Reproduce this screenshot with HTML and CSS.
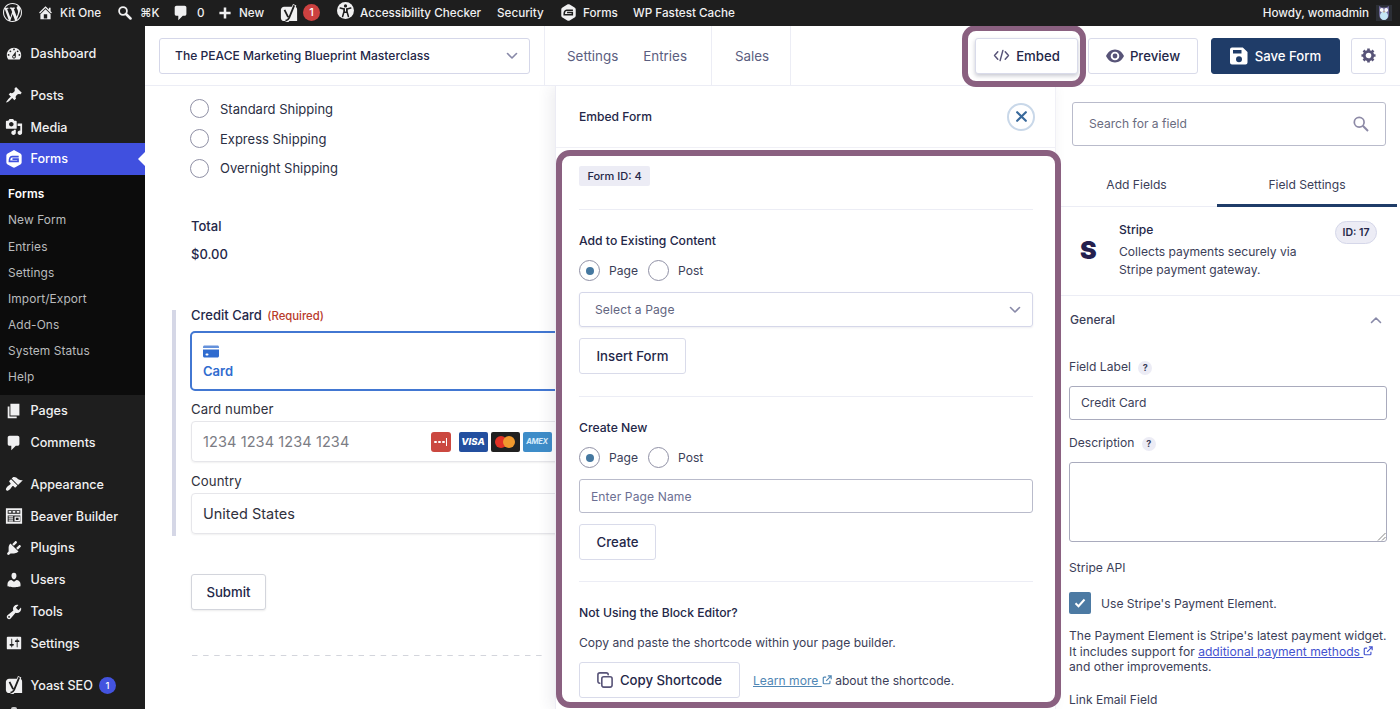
FILE: index.html
```
<!DOCTYPE html>
<html lang="en">
<head>
  <meta charset="UTF-8" />
  <meta name="viewport" content="width=device-width, initial-scale=1.0"/>
  <title>Form Editor - Kit One</title>
  <link rel="stylesheet" href="styles.css">
</head>
<body>
  <svg class="sprite">
    <symbol id="i-wp" viewBox="0 0 20 20"><path d="M20 10c0-5.51-4.49-10-10-10C4.48 0 0 4.49 0 10c0 5.52 4.48 10 10 10 5.51 0 10-4.48 10-10zM7.78 15.37L4.37 6.22c.55-.02 1.17-.08 1.17-.08.5-.06.44-1.13-.06-1.11 0 0-1.45.11-2.37.11-.18 0-.37 0-.58-.01C4.12 2.69 6.87 1.11 10 1.11c2.33 0 4.45.87 6.05 2.34-.68-.11-1.65.39-1.65 1.58 0 .74.45 1.36.9 2.1.35.61.55 1.36.55 2.46 0 1.49-1.4 5-1.4 5l-3.03-8.37c.54-.02.82-.17.82-.17.5-.05.44-1.25-.06-1.22 0 0-1.44.12-2.38.12-.87 0-2.33-.12-2.33-.12-.5-.03-.56 1.2-.06 1.22l.92.08 1.26 3.41zM17.41 10c.24-.64.74-1.87.43-4.25.7 1.29 1.05 2.71 1.05 4.25 0 3.29-1.73 6.24-4.4 7.78.97-2.59 1.94-5.2 2.92-7.78zM6.1 18.09C3.12 16.65 1.11 13.53 1.11 10c0-1.3.23-2.48.72-3.59C3.25 10.3 4.67 14.2 6.1 18.09zm4.03-6.63l2.58 6.98c-.86.29-1.76.45-2.71.45-.79 0-1.57-.11-2.29-.33.81-2.38 1.62-4.74 2.42-7.1z"/></symbol>
    <symbol id="i-home" viewBox="0 0 20 20"><path d="M16 8.5l1.53 1.53-1.06 1.06L10 4.6l-6.47 6.49-1.06-1.06L10 2.5l4 4v-2h2v4zm-6-2.46l6 5.99V18H4v-5.97zM12 17v-5H8v5h4z"/></symbol>
    <symbol id="i-search" viewBox="0 0 20 20"><circle cx="8" cy="8" r="5.2" fill="none" stroke="currentColor" stroke-width="2.4"/><path d="M12 12l6 6" stroke="currentColor" stroke-width="3.4" stroke-linecap="round"/></symbol>
    <symbol id="i-comment" viewBox="0 0 20 20"><path d="M5 2h9c1.1 0 2 .9 2 2v7c0 1.1-.9 2-2 2h-2l-5 5v-5H5c-1.1 0-2-.9-2-2V4c0-1.1.9-2 2-2z"/></symbol>
    <symbol id="i-plus" viewBox="0 0 20 20"><path d="M8.2 2h3.6v6.2H18v3.6h-6.200V18H8.200v-6.200H2V8.200h6.200z"/></symbol>
    <symbol id="i-yoast" viewBox="0 0 20 20"><path d="M4.500 3H17c1.200.500 2 1.600 2 3v13H4.500C2.600 19 1 17.500 1 15.500v-9C1 4.500 2.600 3 4.500 3z"/><path d="M16.300.800L10.300 15.800c-.700 1.900-1.800 2.900-4.200 3.200" fill="none" stroke="currentColor" stroke-width="4"/><path d="M5 6.500l4 8M15.800 1.500L10 15.600c-.700 1.900-1.800 2.700-3.900 3" fill="none" stroke="#1e1e1e" stroke-width="2"/></symbol>
    <symbol id="i-access" viewBox="0 0 20 20"><circle cx="10" cy="10" r="10"/><circle cx="10" cy="4.600" r="1.900" fill="#1e1e1e"/><path d="M3.800 7.200l4.400 1v3.200L6.600 17M16.200 7.200l-4.400 1v3.200l1.600 5.600M8.500 8v4h3V8" fill="none" stroke="#1e1e1e" stroke-width="1.800" stroke-linecap="round" stroke-linejoin="round"/></symbol>
    <symbol id="i-gravity" viewBox="0 0 20 20"><path d="M8.600.700c.900-.500 1.900-.500 2.800 0l5.700 3.300c.900.500 1.400 1.400 1.400 2.400v7.200c0 1-.500 1.900-1.400 2.400l-5.700 3.300c-.900.500-1.900.500-2.800 0L2.900 16c-.900-.500-1.400-1.400-1.400-2.400V6.400c0-1 .500-1.900 1.400-2.400z"/><path d="M15.200 7.300H7.800c-2 0-2.900 2-2.900 5.400h9.600v-2.600H8.300" fill="none" stroke="var(--cut, #1e1e1e)" stroke-width="1.800"/></symbol>
    <symbol id="i-dash" viewBox="0 0 20 20"><path d="M3.760 16h12.480c1.100-1.370 1.760-3.110 1.760-5 0-4.420-3.580-8-8-8s-8 3.580-8 8c0 1.890.660 3.630 1.760 5zM10 4c.550 0 1 .450 1 1s-.450 1-1 1-1-.450-1-1 .450-1 1-1zM6 6c.550 0 1 .450 1 1s-.450 1-1 1-1-.450-1-1 .450-1 1-1zm8 0c.550 0 1 .450 1 1s-.450 1-1 1-1-.450-1-1 .450-1 1-1zm-5.370 5.550L12 7v6c0 1.100-.900 2-2 2s-2-.900-2-2c0-.570.240-1.080.630-1.450zM4 10c.550 0 1 .450 1 1s-.450 1-1 1-1-.450-1-1 .450-1 1-1zm12 0c.550 0 1 .450 1 1s-.450 1-1 1-1-.450-1-1 .450-1 1-1zm-5 3c0-.550-.450-1-1-1s-1 .450-1 1 .450 1 1 1 1-.450 1-1z"/></symbol>
    <symbol id="i-post" viewBox="0 0 20 20"><path d="M10.440 3.020l1.820-1.820 6.360 6.350-1.830 1.820c-1.050-.680-2.480-.570-3.410.360l-.750.750c-.920.930-1.040 2.350-.350 3.410l-1.830 1.820-2.410-2.410-2.800 2.790c-.420.420-3.380 2.710-3.800 2.290s1.860-3.390 2.280-3.810l2.790-2.790L4.100 9.360l1.830-1.820c1.050.690 2.480.570 3.400-.360l.750-.750c.930-.920 1.050-2.350.360-3.410z"/></symbol>
    <symbol id="i-media" viewBox="0 0 20 20"><path d="M13 11V4c0-.550-.450-1-1-1h-1.670L9 1H5L3.670 3H2c-.550 0-1 .450-1 1v7c0 .550.450 1 1 1h10c.550 0 1-.450 1-1zM7 4.500c1.380 0 2.500 1.120 2.500 2.500S8.380 9.500 7 9.500 4.500 8.380 4.500 7 5.620 4.500 7 4.500zM14 6h5v10.500c0 1.380-1.120 2.500-2.500 2.500S14 17.880 14 16.500s1.120-2.500 2.500-2.500c.170 0 .340.020.500.050V9h-3V6zm-4 8.050V13h2v3.500c0 1.380-1.120 2.500-2.500 2.500S7 17.880 7 16.500 8.120 14 9.500 14c.170 0 .340.020.500.050z"/></symbol>
    <symbol id="i-page" viewBox="0 0 20 20"><path d="M6 15V2h10v13H6zm-1 1h8v2H3V5h2v11z"/></symbol>
    <symbol id="i-brush" viewBox="0 0 20 20"><path d="M14.480 11.060L7.410 3.990l1.500-1.500c.500-.560 2.300-.470 3.510.320 1.210.800 1.430 1.280 2.910 2.100 1.180.640 2.450 1.260 4.450.850zm-.710.710L6.700 4.700 4.930 6.470c-.390.390-.390 1.020 0 1.410l1.060 1.060c.390.390.390 1.030 0 1.420-.600.600-1.430 1.110-2.210 1.690-.350.260-.700.530-1.010.840C1.430 14.230.400 16.080 1.400 17.070c.990 1 2.840-.030 4.180-1.360.310-.310.580-.660.850-1.020.570-.780 1.080-1.610 1.690-2.210.390-.390 1.020-.390 1.410 0l1.060 1.060c.390.390 1.020.390 1.410 0z"/></symbol>
    <symbol id="i-beaver" viewBox="0 0 20 20"><path fill-rule="evenodd" d="M1 1.500h18v17H1zM3 3.500h14v4H3zM3 9.500h14v7H3z"/><path d="M4 4.500h3v2H4zM8.500 4.500h3v2h-3zM13 4.500h3v2h-3zM4 10.300h5v1.300H4zM4 12.500h5v1.300H4zM4 14.700h5V16H4z"/><path d="M11.300 11.200h4.500v4h-4.500z" fill="none" stroke="currentColor" stroke-width="1.500"/></symbol>
    <symbol id="i-plug" viewBox="0 0 20 20"><path d="M13.110 4.360L9.870 7.600 8 5.730l3.240-3.240c.350-.340 1.050-.200 1.560.320.520.510.660 1.210.310 1.550zm-8 1.770l.910-1.120 9.010 9.010-1.190.840c-.710.710-2.630 1.160-3.820 1.160H6.140L4.900 17.260c-.590.590-1.540.590-2.120 0-.590-.580-.590-1.530 0-2.120l1.240-1.240v-3.880c0-1.130.400-3.190 1.090-3.890zm7.260 3.970l3.240-3.240c.340-.350 1.040-.210 1.550.310.520.510.660 1.210.310 1.550l-3.240 3.250z"/></symbol>
    <symbol id="i-user" viewBox="0 0 20 20"><path d="M10 9.250c-2.270 0-2.730-3.440-2.730-3.440C7 4.020 7.820 2 9.970 2c2.160 0 2.980 2.020 2.710 3.810 0 0-.410 3.440-2.680 3.440zm0 2.570L12.720 10c2.390 0 4.520 2.330 4.520 4.530v2.490s-3.650 1.130-7.240 1.130c-3.650 0-7.240-1.130-7.240-1.130v-2.490c0-2.250 1.940-4.480 4.470-4.480z"/></symbol>
    <symbol id="i-tool" viewBox="0 0 20 20"><path d="M16.680 9.770c-1.340 1.340-3.300 1.670-4.950.990l-5.410 6.520c-.990.990-2.590.990-3.580 0s-.990-2.590 0-3.570l6.520-5.420c-.680-1.650-.350-3.610.990-4.950 1.280-1.280 3.120-1.620 4.720-1.060l-2.890 2.890 2.820 2.820 2.860-2.870c.530 1.580.180 3.390-1.080 4.650zM3.810 16.210c.400.390 1.040.390 1.430 0 .400-.400.400-1.040 0-1.430-.390-.400-1.030-.400-1.430 0-.390.390-.390 1.030 0 1.430z"/></symbol>
    <symbol id="i-sliders" viewBox="0 0 20 20"><path d="M18 16V4c0-.550-.450-1-1-1H3c-.550 0-1 .450-1 1v12c0 .550.450 1 1 1h14c.550 0 1-.450 1-1zM8 11h1c.550 0 1 .450 1 1s-.450 1-1 1H8v1.500c0 .280-.220.500-.500.500s-.500-.220-.500-.500V13H6c-.550 0-1-.450-1-1s.450-1 1-1h1V5.500c0-.280.220-.500.500-.500s.500.220.500.500V11zm5-2h-1c-.550 0-1-.450-1-1s.450-1 1-1h1V5.500c0-.280.220-.500.500-.500s.500.220.500.500V7h1c.550 0 1 .450 1 1s-.450 1-1 1h-1v5.500c0 .280-.220.500-.500.500s-.500-.220-.500-.500V9z"/></symbol>
    <symbol id="i-chev" viewBox="0 0 12 8"><path d="M1.500 1.500L6 6l4.500-4.500" fill="none" stroke="currentColor" stroke-width="1.600" stroke-linecap="round" stroke-linejoin="round"/></symbol>
    <symbol id="i-ext" viewBox="0 0 12 12"><path d="M5 2.500H2.500a1 1 0 0 0-1 1v6a1 1 0 0 0 1 1h6a1 1 0 0 0 1-1V7M7 1h4v4M11 1L5 7" fill="none" stroke="currentColor" stroke-width="1.400"/></symbol>
  </svg>

  <header class="adminbar">
    <span class="bar-item wp"><svg class="ic19"><use href="#i-wp"/></svg></span>
    <span class="bar-item site"><svg class="ic17"><use href="#i-home"/></svg>Kit One</span>
    <span class="bar-item find"><svg class="ic15"><use href="#i-search"/></svg>⌘K</span>
    <span class="bar-item talk"><svg class="ic18"><use href="#i-comment"/></svg>0</span>
    <span class="bar-item new"><svg class="ic14"><use href="#i-plus"/></svg>New</span>
    <span class="bar-item yoast"><svg class="ic18"><use href="#i-yoast"/></svg><b class="count">1</b></span>
    <span class="bar-item access"><svg class="ic17"><use href="#i-access"/></svg>Accessibility Checker</span>
    <span class="bar-item security">Security</span>
    <span class="bar-item gforms"><svg class="ic17"><use href="#i-gravity"/></svg>Forms</span>
    <span class="bar-item cache">WP Fastest Cache</span>
    <span class="bar-item howdy">Howdy, womadmin
      <svg class="avatar" viewBox="0 0 16 16"><rect width="16" height="16" fill="#2c2f36"/><path d="M3 1l3 1.500h4L13 1v8c0 3.500-2 6-5 6s-5-2.500-5-6z" fill="#6f6a9c"/><ellipse cx="8" cy="10.700" rx="4" ry="4.300" fill="#c4e6f5"/><circle cx="5.800" cy="5" r="1.900" fill="#fff"/><circle cx="10.200" cy="5" r="1.900" fill="#fff"/><circle cx="5.800" cy="5" r=".800"/><circle cx="10.200" cy="5" r=".800"/><path d="M7.200 6.500h1.600L8 8z" fill="#d99c4a"/></svg>
    </span>
  </header>

  <div class="shell">
    <nav class="sidebar">
      <a class="item"><svg><use href="#i-dash"/></svg>Dashboard</a>
      <a class="item gap"><svg><use href="#i-post"/></svg>Posts</a>
      <a class="item"><svg><use href="#i-media"/></svg>Media</a>
      <a class="item current"><svg><use href="#i-gravity"/></svg>Forms</a>
      <div class="submenu">
        <a class="on">Forms</a>
        <a>New Form</a>
        <a>Entries</a>
        <a>Settings</a>
        <a>Import/Export</a>
        <a>Add-Ons</a>
        <a>System Status</a>
        <a>Help</a>
      </div>
      <a class="item"><svg><use href="#i-page"/></svg>Pages</a>
      <a class="item"><svg><use href="#i-comment"/></svg>Comments</a>
      <a class="item gap"><svg><use href="#i-brush"/></svg>Appearance</a>
      <a class="item"><svg><use href="#i-beaver"/></svg>Beaver Builder</a>
      <a class="item"><svg><use href="#i-plug"/></svg>Plugins</a>
      <a class="item"><svg><use href="#i-user"/></svg>Users</a>
      <a class="item"><svg><use href="#i-tool"/></svg>Tools</a>
      <a class="item"><svg><use href="#i-sliders"/></svg>Settings</a>
      <a class="item gap"><svg><use href="#i-yoast"/></svg>Yoast SEO <b class="count blue">1</b></a>
      <span class="next-icon"></span>
    </nav>

    <div class="editor">
      <div class="toolbar">
        <div class="form-switch">The PEACE Marketing Blueprint Masterclass <svg class="chev"><use href="#i-chev"/></svg></div>
        <div class="links main-links"><a>Settings</a><a>Entries</a></div>
        <div class="links sales-link"><a>Sales</a></div>
        <div class="actions">
          <button class="btn embed"><svg viewBox="0 0 18 14"><path d="M5 3L1.500 7 5 11M13 3l3.500 4-3.500 4M10.500 1.500l-3 11" fill="none" stroke="currentColor" stroke-width="1.600" stroke-linecap="round" stroke-linejoin="round"/></svg>Embed</button>
          <button class="btn preview"><svg viewBox="0 0 18 14"><path d="M9 .500C5 .500 1.700 3.300 0 7c1.700 3.700 5 6.500 9 6.500s7.300-2.800 9-6.500C16.300 3.300 13 .500 9 .500zm0 2.200a4.300 4.300 0 1 1 0 8.600 4.300 4.300 0 0 1 0-8.600z" fill="currentColor" fill-rule="evenodd"/><circle cx="9" cy="7" r="2.400" fill="currentColor"/></svg>Preview</button>
          <button class="btn save"><svg viewBox="0 0 18 18"><path fill="#fff" fill-rule="evenodd" d="M2 .500h10.800L17.500 5v10.500a2 2 0 0 1-2 2H2a2 2 0 0 1-2-2v-13a2 2 0 0 1 2-2zM3 3v3.500h8.500V3zM9 9.300a3 3 0 1 0 0 6 3 3 0 0 0 0-6z"/></svg>Save Form</button>
          <button class="btn gear"><svg viewBox="0 0 16 16"><circle cx="8" cy="8" r="4.500" fill="none" stroke="currentColor" stroke-width="3"/><path d="M8 .500v3M8 12.500v3M.500 8h3M12.500 8h3M2.700 2.700l2 2M11.300 11.300l2 2M2.700 13.300l2-2M11.300 4.700l2-2" stroke="currentColor" stroke-width="2.800"/></svg></button>
          <div class="mark mark-embed"></div>
        </div>
      </div>

      <div class="columns">
        <main class="canvas">
          <label class="choice"><i class="radio"></i>Standard Shipping</label>
          <label class="choice"><i class="radio"></i>Express Shipping</label>
          <label class="choice"><i class="radio"></i>Overnight Shipping</label>
          <div class="total"><b>Total</b><b>$0.00</b></div>
          <section class="card-field">
            <div class="card-label">Credit Card <span>(Required)</span></div>
            <div class="card-tab">
              <svg viewBox="0 0 16 12"><path d="M0 2.500V1.500C0 .700.700 0 1.500 0h13c.800 0 1.500.700 1.500 1.500v1z" opacity=".75"/><path fill-rule="evenodd" d="M0 4h16v6.500c0 .800-.700 1.500-1.500 1.500h-13C.700 12 0 11.300 0 10.500zm3.500 4a1 1 0 1 0 0 2h1a1 1 0 1 0 0-2z"/></svg>
              Card
            </div>
            <div class="stripe-label">Card number</div>
            <div class="stripe-input">
              <span class="placeholder">1234 1234 1234 1234</span>
              <span class="brand dots"><i></i><i></i><i></i><em></em></span>
              <span class="brand visa">VISA</span>
              <span class="brand mc"><i></i><i></i></span>
              <span class="brand amex">AMEX</span>
            </div>
            <div class="stripe-label country">Country</div>
            <div class="stripe-input">United States</div>
          </section>
          <button class="btn submit">Submit</button>
          <svg class="dashes"><path d="M1 .500h352" stroke="#d3d5dc" stroke-dasharray="5.500 5.600"/></svg>
        </main>

        <section class="flyout">
          <div class="fly-head">Embed Form
            <span class="close"><svg viewBox="0 0 12 12"><path d="M2 2l8 8M10 2l-8 8" stroke="currentColor" stroke-width="2" stroke-linecap="round"/></svg></span>
          </div>
          <div class="fly-body">
            <span class="form-id">Form ID: 4</span>
            <div class="block">
              <h3>Add to Existing Content</h3>
              <div class="radios"><i class="radio on"></i><span>Page</span><i class="radio"></i><span>Post</span></div>
              <div class="select">Select a Page <svg class="chev"><use href="#i-chev"/></svg></div>
              <button class="btn insert">Insert Form</button>
            </div>
            <div class="block second">
              <h3>Create New</h3>
              <div class="radios"><i class="radio on"></i><span>Page</span><i class="radio"></i><span>Post</span></div>
              <div class="name-input">Enter Page Name</div>
              <button class="btn create">Create</button>
            </div>
            <div class="block third">
              <h3>Not Using the Block Editor?</h3>
              <p>Copy and paste the shortcode within your page builder.</p>
              <div class="copy-row">
                <button class="btn copy"><svg viewBox="0 0 16 16"><rect x="4.800" y="4.800" width="10.300" height="10.300" rx="2" fill="none" stroke="currentColor" stroke-width="1.600"/><path d="M2.800 11.200C1.600 11.200.900 10.400.900 9.300V2.900c0-1.100.900-2 2-2h6.400c1.100 0 1.900.700 1.900 1.900" fill="none" stroke="currentColor" stroke-width="1.600" stroke-linecap="round"/></svg>Copy Shortcode</button>
                <span><a>Learn more <svg class="ext"><use href="#i-ext"/></svg></a> about the shortcode.</span>
              </div>
            </div>
          </div>
          <div class="mark mark-body"></div>
        </section>

        <aside class="panel">
          <div class="search">Search for a field <svg viewBox="0 0 16 16"><circle cx="6.200" cy="6.200" r="4.900" fill="none" stroke="currentColor" stroke-width="1.700"/><path d="M9.800 9.800l5.200 5.200" stroke="currentColor" stroke-width="2"/></svg></div>
          <div class="tabs"><a>Add Fields</a><a class="active">Field Settings</a></div>
          <div class="field-info">
            <div class="stripe-s">S</div>
            <div class="info-text"><b>Stripe</b>Collects payments securely via Stripe payment gateway.</div>
            <span class="pill">ID: 17</span>
          </div>
          <div class="section-head">General <svg class="chev up"><use href="#i-chev"/></svg></div>
          <div class="settings">
            <div class="label">Field Label <i>?</i></div>
            <div class="text-input">Credit Card</div>
            <div class="label desc">Description <i>?</i></div>
            <div class="textarea"><svg viewBox="0 0 9 9"><path d="M1 8.500L8.500 1M5 8.500L8.500 5" stroke="#777" stroke-width=".900"/></svg></div>
            <div class="label api">Stripe API</div>
            <div class="check-row"><span class="check"><svg viewBox="0 0 12 10"><path d="M1.500 5.200l3 3L10.500 1.500" fill="none" stroke="#fff" stroke-width="2"/></svg></span>Use Stripe's Payment Element.</div>
            <p class="help">The Payment Element is Stripe's latest payment widget.<br>It includes support for <a>additional payment methods <svg class="ext"><use href="#i-ext"/></svg></a><br>and other improvements.</p>
            <div class="label">Link Email Field</div>
          </div>
        </aside>
      </div>
    </div>
  </div>
</body>
</html>
```
FILE: styles.css
```
* { box-sizing: border-box; }
body {
  margin: 0;
  height: 709px;
  overflow: hidden;
  font-family: Inter, "Liberation Sans", sans-serif;
  font-size: 12.1px;
  color: #242748;
  background: #fff;
}
svg { fill: currentColor; flex: none; }
i, em { font-style: normal; }
h3, p { margin: 0; }
.sprite { display: none; }

/* admin bar */
.adminbar {
  height: 26px;
  background: #1e1e1e;
  color: #f0f0f1;
  display: flex;
  align-items: center;
  font-size: 11.7px;
  font-weight: 500;
  white-space: nowrap;
}
.bar-item {
  display: flex;
  align-items: center;
  height: 26px;
  padding-bottom: 1px;
}
.ic14 { width: 14px; height: 14px; }
.ic15 { width: 15px; height: 15px; }
.ic17 { width: 17px; height: 17px; }
.ic18 { width: 18px; height: 18px; }
.ic19 { width: 19px; height: 19px; }
.wp { width: 37px; padding-left: 3px; }
.site { width: 80px; gap: 6px; }
.find { width: 56px; gap: 8px; }
.talk { width: 45px; gap: 6px; }
.new { width: 62px; gap: 7px; }
.talk svg { margin-left: -1px; margin-right: 1px; }
.yoast { width: 57px; gap: 5px; }
.access { width: 160px; gap: 6px; }
.access svg { margin-top: -5px; }
.security { width: 63px; }
.gforms { width: 73px; gap: 6px; }
.howdy { margin-left: auto; margin-right: 8px; gap: 7px; }
.avatar { width: 16px; height: 16px; }
.count {
  width: 17px;
  height: 17px;
  border-radius: 50%;
  background: #cc4140;
  color: #fff;
  font-size: 11px;
  font-weight: 500;
  line-height: 17px;
  text-align: center;
}
.count.blue { background: #4353df; font-size: 9.5px; margin-left: 6px; }

.shell { display: flex; height: 683px; overflow: hidden; }

/* left menu */
.sidebar {
  width: 145px;
  background: #1e1e1e;
  color: #f0f0f1;
  padding-top: 11.7px;
  flex: none;
  overflow: hidden;
}
.item {
  display: flex;
  align-items: center;
  height: 31.8px;
  padding-left: 4.5px;
  font-size: 12.6px;
  font-weight: 500;
}
.item > svg { width: 18px; height: 18px; margin-right: 8px; }
.item.gap { margin-top: 10px; }
.item.current {
  background: #4050df;
  color: #fff;
  --cut: #4050df;
}
.item.current::after {
  content: "";
  margin-left: auto;
  border: 7px solid transparent;
  border-right-color: #fff;
  border-left: 0;
}
.submenu {
  background: #0c0c0c;
  height: 220px;
  padding: 6.5px 0 0 8px;
  color: #b9bbbd;
  font-size: 11.9px;
}
.submenu a {
  display: block;
  height: 26.1px;
  line-height: 26.1px;
  letter-spacing: .1px;
}
.submenu .on { color: #fff; font-weight: 600; }
.next-icon {
  display: block;
  width: 6px;
  height: 2px;
  margin: 6px 0 0 10.5px;
  border-radius: 3px 3px 0 0;
  background: #c8c8c9;
}

/* editor */
.editor { flex: 1; min-width: 0; display: flex; flex-direction: column; }
.toolbar {
  height: 60px;
  border-bottom: 1px solid #ecedf5;
  display: flex;
  align-items: center;
  flex: none;
}
.form-switch {
  margin-left: 14px;
  width: 371px;
  height: 36px;
  border: 1px solid #d5d7e9;
  border-radius: 3px;
  padding: 0 11px 0 15px;
  display: flex;
  align-items: center;
  justify-content: space-between;
  font-weight: 500;
}
.chev { width: 12px; height: 8px; color: #8889a8; }
.links {
  height: 59px;
  display: flex;
  align-items: center;
  border-left: 1px solid #ecedf5;
  color: #5b5e80;
  font-size: 13.4px;
}
.main-links { margin-left: 14px; padding-left: 22px; gap: 25px; width: 167px; }
.sales-link { border-right: 1px solid #ecedf5; width: 80px; justify-content: center; padding-left: 2px; }
.actions { display: flex; margin-left: auto; margin-right: 14px; position: relative; }
.btn {
  height: 36px;
  border: 1px solid #d9dbea;
  border-radius: 3px;
  background: #fff;
  color: #242748;
  font-family: inherit;
  font-size: 13.2px;
  font-weight: 500;
  padding: 0;
  display: flex;
  align-items: center;
  justify-content: center;
  white-space: nowrap;
}
.embed { width: 103px; gap: 6px; margin-right: 10px; box-shadow: 0 2px 4px rgba(36,39,72,.25); }
.embed svg { width: 17px; height: 13px; color: #585478; }
.preview { width: 110px; gap: 6px; margin-right: 13px; }
.preview svg { width: 18px; height: 14px; color: #585478; }
.save { width: 129px; gap: 7px; margin-right: 11px; background: #1f3c68; border-color: #1f3c68; color: #fff; }
.save svg { width: 18px; height: 18px; }
.gear { width: 35px; }
.gear svg { width: 15px; height: 15px; color: #585478; }
.mark {
  position: absolute;
  border: 6px solid #8a6080;
  border-radius: 14px;
  pointer-events: none;
  z-index: 5;
}
.mark-embed { left: -13px; top: -13px; width: 124px; height: 62px; }
.columns { display: flex; flex: 1; min-height: 0; }

/* form canvas */
.canvas { width: 410px; flex: none; padding: 8px 0 0 45px; overflow: hidden; }
.choice { display: flex; align-items: center; gap: 11px; height: 29.8px; font-size: 13px; color: #2b2f44; }
.radio { width: 19px; height: 19px; border: 1px solid #8f90a5; border-radius: 50%; flex: none; }
.total { padding: 29px 0 0 1px; height: 126.600px; }
.total b { display: block; height: 28px; line-height: 28px; font-weight: 500; font-size: 13px; }
.card-field {
  height: 226px;
  margin-left: -18px;
  border-left: 4px solid #d5d7e6;
  padding-left: 15px;
  white-space: nowrap;
}
.card-label { height: 21px; line-height: 10px; font-size: 13px; font-weight: 500; }
.card-label span { color: #b83a2a; font-size: 11.3px; margin-left: 2px; }
.card-tab {
  height: 60px;
  width: 400px;
  margin-left: -1px;
  border: 2px solid #4277d2;
  border-radius: 5px;
  padding: 12px 0 0 11px;
  color: #306ccf;
  font-size: 13px;
  font-weight: 600;
  line-height: 16px;
}
.card-tab svg { display: block; width: 16px; height: 13px; margin-bottom: 5px; }
.stripe-label { height: 30.500px; line-height: 37px; font-size: 13.2px; color: #30313d; letter-spacing: .1px; }
.country { line-height: 39px; }
.stripe-input {
  height: 41px;
  width: 400px;
  border: 1px solid #e6e6ea;
  border-radius: 4px;
  box-shadow: 0 1px 2px rgba(0,0,0,.06);
  padding-left: 11px;
  display: flex;
  align-items: center;
  font-size: 14.500px;
  color: #30313d;
}
.placeholder { color: #7b7c84; width: 227.500px; letter-spacing: .1px; }
.brand {
  width: 29px;
  height: 20px;
  margin-right: 3px;
  border-radius: 2px;
  display: flex;
  align-items: center;
  justify-content: center;
  font-weight: 700;
  color: #fff;
}
.dots { width: 20px; background: #cb4840; gap: 1.5px; margin-right: 8px; border-radius: 3px; }
.dots i { width: 2.5px; height: 2.5px; border-radius: 50%; background: #fff; }
.dots em { width: 1px; height: 8px; background: #fff; }
.visa { background: #234f9f; font-size: 9.500px; font-style: italic; font-weight: 800; }
.mc { background: #202020; }
.mc i { width: 12px; height: 12px; border-radius: 50%; background: #e33125; }
.mc i + i { background: #f0992e; margin-left: -4px; }
.amex { background: #3e8dc9; font-size: 7.500px; font-style: italic; color: #d7ecfb; letter-spacing: -.3px; }
.submit { width: 75px; margin: 38.500px 0 0 1px; border-color: #d3d5dc; box-shadow: 0 1px 2px rgba(0,0,0,.08); }
.dashes { display: block; width: 354px; height: 1px; margin: 45px 0 0 1px; }

/* embed flyout */
.flyout {
  width: 501px;
  flex: none;
  background: #fff;
  border-left: 1px solid #ececf4;
  border-right: 1px solid #f0f0f6;
  box-shadow: -4px 0 14px rgba(40,40,80,.09);
  position: relative;
  clip-path: inset(0 -10px 0 -20px);
}
.fly-head {
  height: 62px;
  border-bottom: 1px solid #f0f0f6;
  padding: 0 20px 0 23px;
  display: flex;
  align-items: center;
  justify-content: space-between;
  font-weight: 500;
}
.close {
  width: 28px;
  height: 28px;
  border: 2px solid #c9d8e9;
  border-radius: 50%;
  display: flex;
  align-items: center;
  justify-content: center;
  color: #39699b;
}
.close svg { width: 13px; height: 13px; }
.fly-body { padding: 18px 22px 0 23px; }
.form-id {
  display: block;
  width: 71px;
  height: 20px;
  line-height: 20px;
  text-align: center;
  background: #ececf5;
  border-radius: 2px;
  font-size: 11px;
  font-weight: 500;
  margin-bottom: 23px;
}
.block { border-top: 1px solid #ecedf5; padding-top: 21px; height: 187px; }
.block h3 { font-size: 12.200px; font-weight: 500; line-height: 20px; height: 29px; }
.radios { display: flex; align-items: center; height: 21px; margin-bottom: 11px; }
.radios .radio { width: 21px; height: 21px; margin-right: 9px; display: flex; align-items: center; justify-content: center; }
.radios .radio.on::after { content: ""; width: 8px; height: 8px; border-radius: 50%; background: #4578a0; }
.radios span { width: 39px; color: #3b3e58; }
.select, .name-input {
  height: 35px;
  border: 1px solid #d5d7e9;
  border-radius: 3px;
  padding: 0 11px 0 15px;
  display: flex;
  align-items: center;
  justify-content: space-between;
  color: #62657f;
  margin-bottom: 11px;
  letter-spacing: .1px;
}
.select { box-shadow: 0 1px 2px rgba(36,39,72,.08); }
.name-input { height: 34px; padding-left: 11px; border-color: #b9bbcb; color: #6c6f93; }
.insert { width: 107px; }
.create { width: 77px; }
.second { height: 185px; }
.third p { line-height: 20px; margin-bottom: 9px; color: #3b3e58; }
.third { padding-top: 21px; }
.third h3 { height: 30px; }
.copy-row { display: flex; align-items: center; gap: 13px; color: #3b3e58; }
.copy-row a { color: #4f86b4; text-decoration: underline; }
.copy { width: 161px; gap: 7px; }
.copy svg { width: 16px; height: 16px; color: #585478; }
.ext { width: 10px; height: 10px; }
.mark-body { left: 0; top: 64px; width: 505px; height: 558px; }

/* settings panel */
.panel { flex: 1; min-width: 0; color: #3b3e58; overflow: hidden; }
.search {
  margin: 16px 14px 0 16px;
  height: 44px;
  border: 1px solid #b9bbcb;
  border-radius: 3px;
  padding: 0 16px 1px;
  display: flex;
  align-items: center;
  justify-content: space-between;
  color: #6a6c80;
}
.search svg { width: 16px; height: 16px; color: #8d8aa6; }
.tabs { display: flex; height: 63px; padding-top: 17px; }
.tabs a {
  width: 161px;
  height: 44px;
  line-height: 44px;
  border-bottom: 1px solid #ecedf5;
  text-align: center;
}
.tabs .active { width: 180px; border-bottom: 3px solid #1f3c68; }
.field-info {
  display: flex;
  height: 87px;
  padding: 12px 23px 0 20px;
  border-bottom: 1px solid #ecedf5;
}
.stripe-s { width: 43px; padding-top: 15px; padding-left: 4px; font-size: 25px; font-weight: 900; color: #24204e; line-height: 28px; }
.info-text { width: 190px; line-height: 17.5px; }
.info-text b { display: block; font-weight: 500; line-height: 18px; margin-bottom: 4px; color: #242748; }
.pill {
  margin-left: auto;
  width: 42px;
  height: 23px;
  border: 1px solid #d5d7e9;
  border-radius: 12px;
  background: #ececf5;
  font-size: 10.500px;
  font-weight: 600;
  line-height: 21px;
  text-align: center;
  color: #242748;
}
.section-head {
  display: flex;
  align-items: center;
  justify-content: space-between;
  height: 47px;
  padding: 0 18px 0 14px;
  font-weight: 500;
}
.up { transform: rotate(180deg); }
.settings { padding: 14px 13px 0 13px; }
.label { height: 20px; line-height: 20px; white-space: nowrap; }
.label i {
  display: inline-block;
  width: 14px;
  height: 14px;
  line-height: 14px;
  border-radius: 50%;
  background: #ececf5;
  text-align: center;
  font-size: 9px;
  font-weight: 700;
  margin-left: 4px;
}
.text-input {
  height: 34px;
  margin: 9px 0 13px;
  border: 1px solid #a9abbd;
  border-radius: 3px;
  padding-left: 11px;
  line-height: 32px;
}
.textarea {
  height: 80px;
  margin: 9px 0 16px;
  border: 1px solid #a9abbd;
  border-radius: 3px;
  display: flex;
  align-items: flex-end;
  justify-content: flex-end;
}
.textarea svg { width: 9px; height: 9px; }
.check-row { display: flex; align-items: center; gap: 10px; height: 22px; margin: 14px 0; }
.check {
  width: 22px;
  height: 22px;
  border-radius: 2px;
  background: #4c7aa3;
  display: flex;
  align-items: center;
  justify-content: center;
}
.check svg { width: 12px; height: 10px; }
.help { line-height: 15.500px; margin-bottom: 15px; white-space: nowrap; }
.help a { color: #4353cf; text-decoration: underline; }
```
